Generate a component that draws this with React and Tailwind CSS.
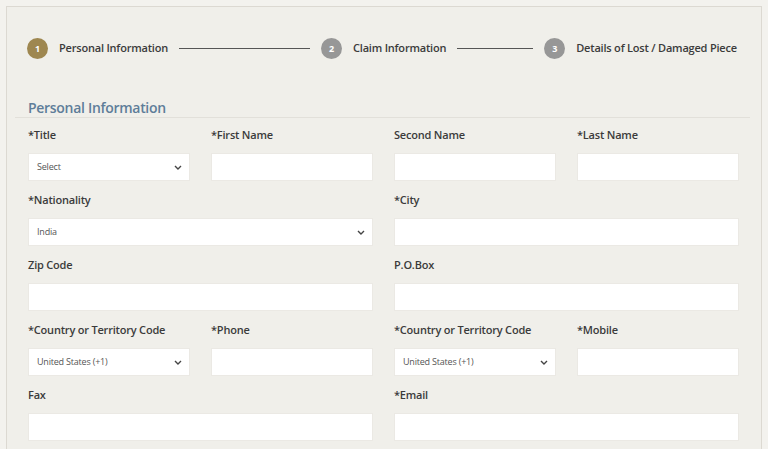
import React from "react";

const font = { fontFamily: '"Open Sans", "Noto Sans", sans-serif' };

function Chevron() {
  return (
    <svg width="8" height="5" viewBox="0 0 8 5" className="shrink-0">
      <path d="M1 1 L4 4 L7 1" fill="none" stroke="#444" strokeWidth="1.4" />
    </svg>
  );
}

function Step({ n, active, label }) {
  return (
    <div className="flex items-center gap-[11px] shrink-0">
      <div
        className={`w-[21px] h-[21px] rounded-full flex items-center justify-center text-white text-[9px] font-bold ${
          active ? "bg-[#9e8750]" : "bg-[#979797]"
        }`}
      >
        {n}
      </div>
      <span className="text-[11px] tracking-[-0.2px] font-semibold text-[#3b3b3b] whitespace-nowrap">{label}</span>
    </div>
  );
}

function Field({ label, span = 1, select }) {
  return (
    <div className={`flex flex-col ${span === 2 ? "col-span-2" : ""}`}>
      <div className="h-[20px] leading-[21px] text-[11px] tracking-[-0.2px] font-semibold text-[#3b3b3b] whitespace-nowrap">
        {label}
      </div>
      <div className="mt-[9px] h-[28px] bg-white border border-[#ebe9e4] flex items-center justify-between pl-[8px] pr-[7px]">
        {select ? (
          <>
            <span className="text-[9px] tracking-[-0.2px] text-[#555]">{select}</span>
            <Chevron />
          </>
        ) : null}
      </div>
    </div>
  );
}

export default function App() {
  return (
    <div className="min-h-screen bg-[#f3f2ee] pt-[6px] px-[6px]" style={font}>
      <div className="border border-[#dcd9d2] border-b-0 bg-[#f0efea] pl-[8px] pr-[11px] pb-[20px]">
        <div className="pt-[31px] pl-[12px] flex items-center">
          <Step n="1" active label="Personal Information" />
          <div className="w-[131px] h-px bg-[#555] mx-[11px]" />
          <Step n="2" label="Claim Information" />
          <div className="w-[76px] h-px bg-[#555] mx-[11px]" />
          <Step n="3" label="Details of Lost / Damaged Piece" />
        </div>

        <div className="mt-[38px] border-b border-[#e2e0da]">
          <h2 className="pl-[13px] h-[20px] leading-[22px] text-[14px] tracking-[-0.3px] font-semibold text-[#5e7d99]">
            Personal Information
          </h2>
        </div>

        <div className="pl-[13px] pr-[11px] pt-[6px] grid grid-cols-4 gap-x-[21px] gap-y-[8px]">
          <Field label="*Title" select="Select" />
          <Field label="*First Name" />
          <Field label="Second Name" />
          <Field label="*Last Name" />

          <Field label="*Nationality" span={2} select="India" />
          <Field label="*City" span={2} />

          <Field label="Zip Code" span={2} />
          <Field label="P.O.Box" span={2} />

          <Field label="*Country or Territory Code" select="United States (+1)" />
          <Field label="*Phone" />
          <Field label="*Country or Territory Code" select="United States (+1)" />
          <Field label="*Mobile" />

          <Field label="Fax" span={2} />
          <Field label="*Email" span={2} />
        </div>
      </div>
    </div>
  );
}
